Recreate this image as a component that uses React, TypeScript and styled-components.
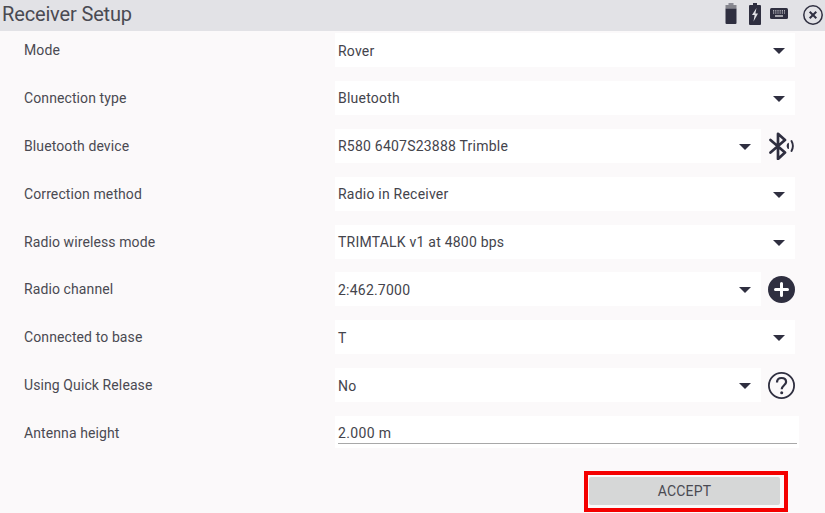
import React from "react";
import styled, { createGlobalStyle } from "styled-components";

const Global = createGlobalStyle`
  html, body { margin: 0; padding: 0; background: #fbf9fa; }
  body { font-family: Roboto, "Liberation Sans", sans-serif; }
`;

const Page = styled.div`
  width: 825px;
  height: 513px;
  overflow: hidden;
  display: flex;
  flex-direction: column;
  background: #fbf9fa;
  color: #44444c;
`;

const Header = styled.header`
  height: 31px;
  flex: none;
  display: flex;
  align-items: flex-start;
  justify-content: space-between;
  background: #e2e2e6;
  padding: 0 2px 0 2px;
`;

const Title = styled.h1`
  margin: 0;
  font-size: 20px;
  line-height: 29px;
  font-weight: 400;
  letter-spacing: -0.15px;
  color: #4a4a52;
`;

const StatusIcons = styled.div`
  display: flex;
  align-items: flex-start;
  color: #2f2f40;
`;

const StatusIcon = styled.svg<{ $mr: number; $mt: number }>`
  display: block;
  margin-top: ${(p) => p.$mt}px;
  margin-right: ${(p) => p.$mr}px;
`;

const Form = styled.main`
  flex: none;
  display: flex;
  flex-direction: column;
  padding: 2px 0 0 24px;
`;

const Row = styled.div`
  height: 47.9px;
  flex: none;
  display: grid;
  grid-template-columns: 311px 460px;
  align-items: start;
`;

const Label = styled.span`
  font-size: 14px;
  line-height: 35px;
  letter-spacing: 0.1px;
  color: #4a4a52;
`;

const Controls = styled.div`
  display: flex;
  align-items: center;
  height: 34px;
`;

const Select = styled.div`
  flex: 1;
  height: 34px;
  box-sizing: border-box;
  background: #fff;
  display: flex;
  align-items: center;
  justify-content: space-between;
  padding: 1px 10.5px 0 3px;
  font-size: 14px;
  letter-spacing: 0.22px;
  color: #44444c;
`;

const Caret = styled.span`
  width: 0;
  height: 0;
  margin-top: 1px;
  border-left: 6px solid transparent;
  border-right: 6px solid transparent;
  border-top: 6px solid #2f2f40;
`;

const SideAction = styled.div`
  width: 34px;
  height: 34px;
  flex: none;
  display: flex;
  align-items: center;
  justify-content: flex-end;
  color: #2f2f40;
`;

const TextField = styled.div`
  width: 464px;
  height: 32px;
  background: #fff;
  padding: 0 2px 0 3px;
  box-sizing: border-box;
`;

const TextValue = styled.div`
  height: 28px;
  box-sizing: border-box;
  line-height: 34px;
  font-size: 14px;
  letter-spacing: 0.35px;
  border-bottom: 1px solid #a8a8a8;
  color: #44444c;
`;

const Footer = styled.footer`
  display: flex;
  justify-content: flex-end;
  padding: 7px 37px 0 0;
`;

const Highlight = styled.div`
  width: 204px;
  height: 41px;
  box-sizing: border-box;
  border: 4px solid #f40000;
  padding: 2px 4px 3px 1px;
`;

const AcceptButton = styled.button`
  display: block;
  width: 100%;
  height: 100%;
  padding: 0;
  border: 0;
  border-radius: 2px;
  background: #d6d7d7;
  font-family: inherit;
  font-size: 14px;
  letter-spacing: 0.2px;
  color: #4a4a52;
`;

type Field = { label: string; value: string; action?: React.ReactNode };

const BluetoothIcon = () => (
  <svg width="28" height="28" viewBox="0 0 28 28" fill="none" stroke="currentColor" strokeLinecap="round" strokeLinejoin="round">
    <path d="M3.5 8 L18 20.5 L11 27 V1.8 L18 8 L3.5 20.5" strokeWidth="2.7" />
    <path d="M21.3 11.5 L21.3 16.5 Q19.2 14 21.3 11.5 Z" fill="currentColor" strokeWidth="1.2" />
    <path d="M24.5 9 Q27.3 14 24.5 19" strokeWidth="1.9" />
  </svg>
);

const PlusIcon = () => (
  <svg width="27" height="27" viewBox="0 0 27 27">
    <circle cx="13.5" cy="13.5" r="13.5" fill="currentColor" />
    <path d="M13.5 7.5 V19.5 M7.5 13.5 H19.5" stroke="#fff" strokeWidth="3" strokeLinecap="round" />
  </svg>
);

const HelpIcon = () => (
  <svg width="27" height="27" viewBox="0 0 27 27" fill="none" stroke="currentColor">
    <circle cx="13.5" cy="13.5" r="12.6" strokeWidth="1.8" />
    <path d="M9 10.5 C9 7.6 11 6 13.5 6 C16.3 6 18.1 7.7 18.1 10 C18.1 13.1 13.7 13.5 13.7 17.3" strokeWidth="2.2" />
    <circle cx="13.7" cy="20.7" r="1.5" fill="currentColor" stroke="none" />
  </svg>
);

const fields: Field[] = [
  { label: "Mode", value: "Rover" },
  { label: "Connection type", value: "Bluetooth" },
  { label: "Bluetooth device", value: "R580 6407S23888 Trimble", action: <BluetoothIcon /> },
  { label: "Correction method", value: "Radio in Receiver" },
  { label: "Radio wireless mode", value: "TRIMTALK v1 at 4800 bps" },
  { label: "Radio channel", value: "2:462.7000", action: <PlusIcon /> },
  { label: "Connected to base", value: "T" },
  { label: "Using Quick Release", value: "No", action: <HelpIcon /> },
];

export default function App() {
  return (
    <Page>
      <Global />
      <Header>
        <Title>Receiver Setup</Title>
        <StatusIcons>
          <StatusIcon $mt={3} $mr={12} width="12" height="21" viewBox="0 0 12 21">
            <path d="M3.5 0 H8.5 V2 H3.5 Z" fill="#8b8b95" />
            <path d="M0.5 2 H11.5 V5.5 H0.5 Z" fill="#85858d" />
            <path d="M0.5 5.5 H11.5 V20 Q11.5 21 10.5 21 H1.5 Q0.5 21 0.5 20 Z" fill="currentColor" />
          </StatusIcon>
          <StatusIcon $mt={3} $mr={9} width="12" height="22" viewBox="0 0 12 22">
            <path fillRule="evenodd" fill="currentColor" d="M4 0 H8 V2 H11 Q12 2 12 3 V21 Q12 22 11 22 H1 Q0 22 0 21 V3 Q0 2 1 2 H4 Z M7.5 5 L3 12 H5.6 L4.5 18.5 L9 10.5 H6.4 Z" />
          </StatusIcon>
          <StatusIcon $mt={8} $mr={15} width="18" height="11" viewBox="0 0 18 11">
            <rect width="18" height="11" rx="1.5" fill="currentColor" />
            <path d="M3 2.8 H15 M3 5 H15" stroke="#d8d8dc" strokeWidth="1.2" strokeDasharray="1.2 1" />
            <path d="M5 8 H13" stroke="#d8d8dc" strokeWidth="1.4" />
          </StatusIcon>
          <StatusIcon $mt={5} $mr={0} width="20" height="20" viewBox="0 0 20 20" fill="none" stroke="currentColor">
            <circle cx="10" cy="10" r="9.2" strokeWidth="1.5" />
            <path d="M6.7 6.7 L13.3 13.3 M13.3 6.7 L6.7 13.3" strokeWidth="2" />
          </StatusIcon>
        </StatusIcons>
      </Header>
      <Form>
        {fields.map((f) => (
          <Row key={f.label}>
            <Label>{f.label}</Label>
            <Controls>
              <Select>
                {f.value}
                <Caret />
              </Select>
              {f.action && <SideAction>{f.action}</SideAction>}
            </Controls>
          </Row>
        ))}
        <Row>
          <Label>Antenna height</Label>
          <TextField>
            <TextValue>2.000 m</TextValue>
          </TextField>
        </Row>
      </Form>
      <Footer>
        <Highlight>
          <AcceptButton>ACCEPT</AcceptButton>
        </Highlight>
      </Footer>
    </Page>
  );
}
